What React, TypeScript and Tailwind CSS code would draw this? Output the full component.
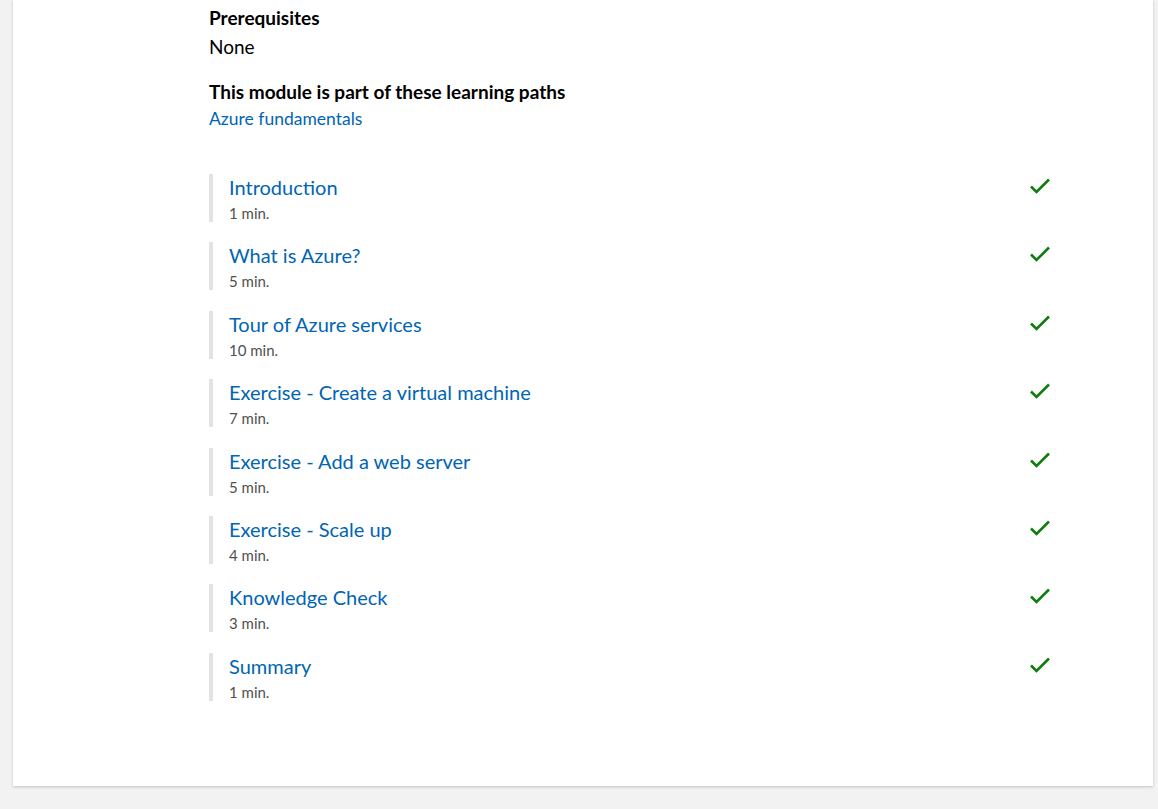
const units = [
  { title: 'Introduction', minutes: 1 },
  { title: 'What is Azure?', minutes: 5 },
  { title: 'Tour of Azure services', minutes: 10 },
  { title: 'Exercise - Create a virtual machine', minutes: 7 },
  { title: 'Exercise - Add a web server', minutes: 5 },
  { title: 'Exercise - Scale up', minutes: 4 },
  { title: 'Knowledge Check', minutes: 3 },
  { title: 'Summary', minutes: 1 },
]

function CheckMark() {
  return (
    <svg width="22" height="18" viewBox="0 0 22 18" fill="none">
      <path d="M2 9.5 L7.5 15 L20 2.5" stroke="#107c10" strokeWidth="2.6" />
    </svg>
  )
}

export default function App() {
  return (
    <div className="min-h-[809px] bg-[#f2f2f2] pb-[22px] font-['Lato','Liberation_Sans',sans-serif] text-black">
      <div className="mx-[13px] w-[1140px] bg-white pl-[196px] pr-[102px] pt-[6px] pb-[85px] shadow-[0_1px_3px_rgba(0,0,0,0.2)]">
        <h3 className="text-[19px] font-bold leading-[24px]">Prerequisites</h3>
        <p className="mt-[5px] text-[19px] leading-[24px]">None</p>

        <h3 className="mt-[21px] text-[19px] font-bold leading-[24px]">This module is part of these learning paths</h3>
        <a className="mt-[3px] block text-[17.5px] leading-[24px] text-[#0065b3]" href="#">
          Azure fundamentals
        </a>

        <ul className="mt-[43px] flex flex-col gap-[20.4px]">
          {units.map((u) => (
            <li key={u.title} className="flex items-start justify-between border-l-4 border-[#e3e3e3] pl-[16px]">
              <div>
                <div className="text-[20px] leading-[26px] text-[#0065b3]">{u.title}</div>
                <div className="mt-[4px] text-[15px] leading-[18px] text-[#505050]">{u.minutes} min.</div>
              </div>
              <div className="mt-[3px]">
                <CheckMark />
              </div>
            </li>
          ))}
        </ul>
      </div>
    </div>
  )
}
